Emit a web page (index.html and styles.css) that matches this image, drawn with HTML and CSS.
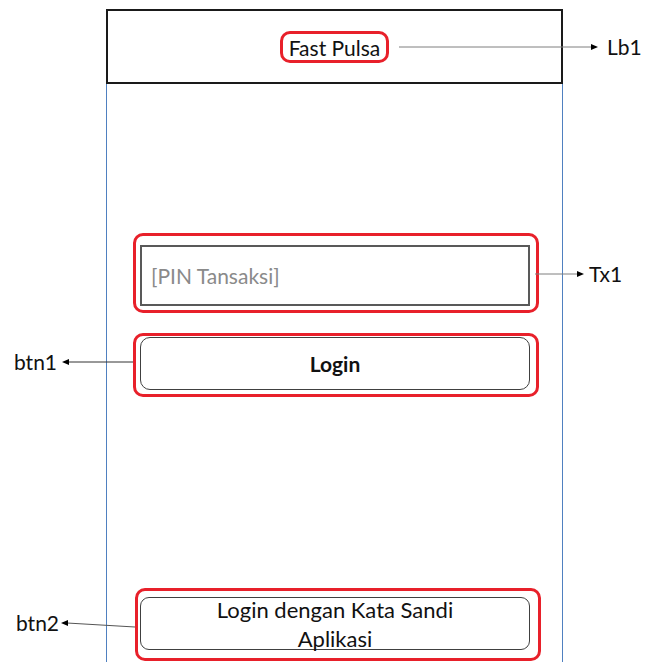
FILE: index.html
```html
<!DOCTYPE html>
<html>
<head>
    <title>Fast Pulsa - Login Mockup</title>
    <link rel="stylesheet" href="styles.css">
</head>
<body>
    <div class="canvas">
        <div class="phone">
            <header class="phone-bar">
                <span class="mark mark-label">Fast Pulsa</span>
            </header>
            <main class="phone-body">
                <div class="mark mark-field">
                    <div class="pin-input">[PIN Tansaksi]</div>
                </div>
                <div class="mark mark-btn">
                    <div class="btn btn-login">Login</div>
                </div>
                <div class="mark mark-btn mark-btn2">
                    <div class="btn btn-alt">Login dengan Kata Sandi<br>Aplikasi</div>
                </div>
            </main>
        </div>

        <!-- annotation arrows -->
        <svg class="arrows" width="646" height="662" viewBox="0 0 646 662">
            <line x1="399" y1="47" x2="592" y2="47" stroke="#7f7f7f" stroke-width="1"/>
            <polygon points="598,47 591,44 591,50" fill="#000"/>
            <line x1="535" y1="274" x2="578" y2="274" stroke="#7f7f7f" stroke-width="1"/>
            <polygon points="584,274 577,271 577,277" fill="#000"/>
            <line x1="133" y1="362" x2="68" y2="362" stroke="#333" stroke-width="1"/>
            <polygon points="62,362 69,359 69,365" fill="#000"/>
            <line x1="135" y1="627" x2="67" y2="623" stroke="#555" stroke-width="1"/>
            <polygon points="61,623 68,620 68,626" fill="#000"/>
        </svg>
        <span class="tag tag-lb1">Lb1</span>
        <span class="tag tag-tx1">Tx1</span>
        <span class="tag tag-btn1">btn1</span>
        <span class="tag tag-btn2">btn2</span>
    </div>
</body>
</html>
```

FILE: styles.css
```css
body {
    margin: 0;
    padding: 0;
    background-color: #fff;
    font-family: 'Lato', 'Open Sans', sans-serif;
    color: #111;
}

.canvas {
    position: relative;
    width: 646px;
    height: 662px;
    overflow: hidden;
}

.phone {
    width: 457px;
    margin-left: 106px;
    padding-top: 9px;
}

.phone-bar {
    box-sizing: border-box;
    height: 75px;
    border: 2px solid #1a1a1a;
    display: flex;
    align-items: center;
    justify-content: center;
}

.phone-body {
    box-sizing: border-box;
    height: 578px;
    border-left: 1px solid #4f80c0;
    border-right: 1px solid #4f80c0;
    padding-left: 26px;
    display: flex;
    flex-direction: column;
}

/* red highlight marks */
.mark {
    box-sizing: border-box;
    border: 3px solid #e8202a;
    border-radius: 10px;
}

.mark-label {
    height: 32px;
    margin-top: 1px;
    padding: 0 6px;
    display: flex;
    align-items: center;
    font-size: 21px;
}

.mark-field {
    width: 406px;
    height: 80px;
    margin-top: 149px;
    padding: 9px 6px 4px 4px;
}

.pin-input {
    box-sizing: border-box;
    height: 100%;
    border: 2px solid #595959;
    padding-left: 9px;
    display: flex;
    align-items: center;
    font-size: 21px;
    color: #8a8a8a;
}

.mark-btn {
    width: 406px;
    height: 64px;
    margin-top: 20px;
    padding: 1px 6px 4px 4px;
}

.mark-btn2 {
    height: 73px;
    margin-top: 191px;
    margin-left: 2px;
    padding: 6px 8px 8px 2px;
}

.btn {
    box-sizing: border-box;
    height: 100%;
    border: 1.5px solid #404040;
    border-radius: 10px;
    display: flex;
    align-items: center;
    justify-content: center;
    text-align: center;
    font-size: 21px;
}

.btn-login {
    font-weight: bold;
}

.btn-alt {
    font-size: 22px;
    line-height: 29px;
    border-radius: 9px;
}

.arrows {
    position: absolute;
    left: 0;
    top: 0;
}

.tag {
    position: absolute;
    font-size: 21px;
    line-height: 24px;
}

.tag-lb1 { left: 607px; top: 35px; }
.tag-tx1 { left: 589px; top: 262px; }
.tag-btn1 { left: 14px; top: 350px; }
.tag-btn2 { left: 16px; top: 611px; }
```
